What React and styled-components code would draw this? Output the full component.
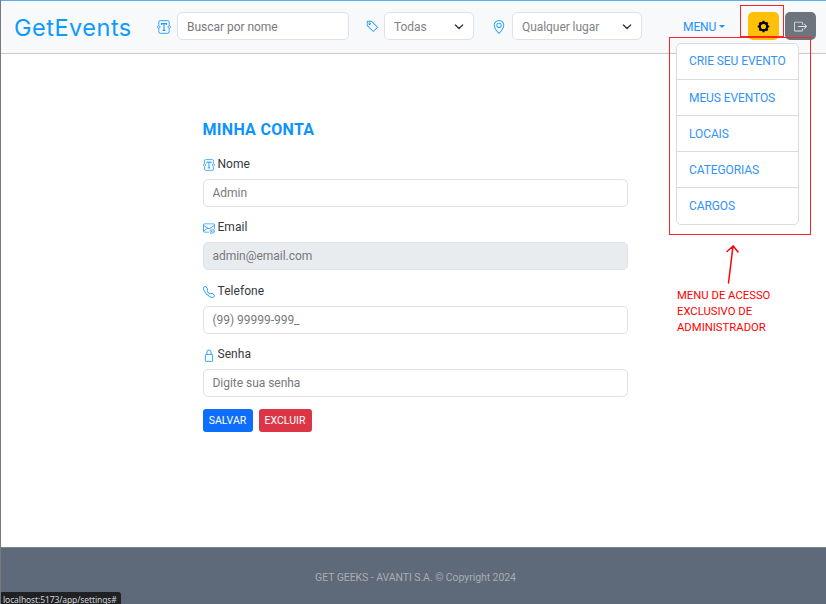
import React from "react";
import styled, { createGlobalStyle } from "styled-components";
import { BsTag, BsGeoAlt, BsEnvelopeAt, BsTelephone, BsBoxArrowRight } from "react-icons/bs";

const Global = createGlobalStyle`
  *, *::before, *::after { box-sizing: border-box; }
  body { margin: 0; background: #fff; overflow: hidden; }
  input, button { font: inherit; }
`;

const Page = styled.div`
  position: relative;
  display: flex;
  flex-direction: column;
  height: 604px;
  border-left: 1px solid #77797b;
  overflow: hidden;
  font: 12px/18px Roboto, sans-serif;
  color: #343a40;
`;

const Header = styled.header`
  display: flex;
  align-items: center;
  height: 54px;
  flex: none;
  padding: 0 10px 2px 12px;
  border-top: 1px solid #5aade8;
  border-bottom: 1px solid #c6c9cc;
  background: #f8f9fa;
`;

const Logo = styled.a`
  width: 144px;
  flex: none;
  padding: 4px 0 0 1px;
  color: #0d99ff;
  font: 400 23.5px/32px Inter, sans-serif;
  letter-spacing: 0.5px;
  white-space: nowrap;
`;

const Filter = styled.div`
  display: flex;
  align-items: center;
  flex: none;
  width: ${(p) => p.$width}px;
  margin-right: ${(p) => p.$gap}px;
`;

const FilterIcon = styled.span`
  display: flex;
  width: ${(p) => p.$width || 18}px;
  padding-top: 1px;
  color: #1e9bfa;
  flex: none;
`;

const Field = styled.input`
  display: block;
  width: 100%;
  min-width: 0;
  height: 28px;
  padding: ${(p) => (p.$inHeader ? "1px 9px 0" : "0 9px")};
  border: 1px solid #dee2e6;
  border-radius: 5px;
  background: ${(p) => (p.disabled ? "#e9ecef" : "#fff")};
  color: #77797c;
  outline: 0;
  opacity: 1;
  letter-spacing: -0.03px;
  &::placeholder { color: #77797c; opacity: 1; }
`;

const Select = styled.button`
  display: flex;
  align-items: center;
  justify-content: space-between;
  flex: 1;
  height: 28px;
  padding: 1px 9px 0;
  border: 1px solid #dee2e6;
  border-radius: 5px;
  background: #fff;
  color: #808386;
  letter-spacing: -0.06px;
`;

const MenuToggle = styled.a`
  display: flex;
  align-items: center;
  gap: 3px;
  width: 65px;
  padding-top: 1px;
  flex: none;
  color: #1e90ff;
  letter-spacing: -0.1px;
  &::after {
    content: "";
    border: 3px solid transparent;
    border-top-color: #1e90ff;
    border-bottom: 0;
  }
`;

const IconButton = styled.button`
  display: flex;
  align-items: center;
  justify-content: center;
  flex: none;
  width: 31px;
  height: 28px;
  margin-right: 6px;
  padding: 1px 0 0;
  border: 0;
  border-radius: 5px;
  background: ${(p) => p.$bg};
  color: ${(p) => p.$color};
`;

const Main = styled.main`
  flex: 1;
  padding: 66px 198px 0 201.5px;
`;

const Title = styled.h1`
  margin: 0 0 14.6px;
  color: #0d93ff;
  font-size: 16px;
  line-height: 20px;
  font-weight: 700;
  letter-spacing: 0.3px;
`;

const Group = styled.div`
  height: 63.5px;
`;

const Label = styled.label`
  display: flex;
  align-items: center;
  gap: 3px;
  height: 18px;
  margin-bottom: 6px;
  letter-spacing: 0.05px;
  svg { color: #1e9bfa; flex: none; position: relative; top: 1px; }
`;

const Actions = styled.div`
  display: flex;
  gap: 6px;
`;

const Action = styled.button`
  height: 23px;
  width: ${(p) => p.$width}px;
  padding: 1px 0 0;
  border: 0;
  border-radius: 3px;
  background: ${(p) => p.$bg};
  color: #fff;
  font-size: 10.5px;
`;

const Footer = styled.footer`
  display: flex;
  align-items: center;
  justify-content: center;
  flex: none;
  height: 57px;
  padding: 3px 0 0 4px;
  border-top: 1px solid #7d8590;
  background: #5e697a;
  color: #a9adb3;
  font-size: 10.5px;
  letter-spacing: -0.07px;
`;

const Dropdown = styled.ul`
  position: absolute;
  top: 43px;
  left: 675px;
  width: 123px;
  margin: 0;
  padding: 0;
  list-style: none;
  border: 1px solid #d9dbde;
  border-radius: 5px;
  background: #fff;
`;

const DropdownItem = styled.li`
  height: 36px;
  padding: 0 0 0 12px;
  line-height: 37px;
  letter-spacing: -0.09px;
  color: #3392f5;
  white-space: nowrap;
  &:first-child { height: 35px; line-height: 35px; }
  &:last-child { height: 37px; }
  & + & { border-top: 1px solid #d9dbde; }
`;

const Highlight = styled.div`
  position: absolute;
  left: ${(p) => p.$x}px;
  top: ${(p) => p.$y}px;
  width: ${(p) => p.$w}px;
  height: ${(p) => p.$h}px;
  border: 1px solid #f22;
`;

const Arrow = styled.svg`
  position: absolute;
  left: 719px;
  top: 240px;
`;

const Note = styled.p`
  position: absolute;
  left: 676px;
  top: 287.5px;
  width: 120px;
  margin: 0;
  color: #f00;
  font-size: 11.3px;
  line-height: 16.2px;
`;

const StatusBar = styled.div`
  position: absolute;
  left: -1px;
  bottom: 0;
  width: 121px;
  height: 12px;
  padding-left: 3px;
  border-top-right-radius: 3px;
  background: #202124;
  color: #d2d3d5;
  font: 8.5px/15px "Noto Sans", sans-serif;
  letter-spacing: -0.1px;
  white-space: nowrap;
`;

const TextIcon = ({ width = 14, height = 14 }) => (
  <svg width={width} height={height} viewBox="0 0 14 14" fill="none" stroke="currentColor" strokeWidth=".9">
    <path d="M1.8 4.8V2.3Q1.8.7 3.2.7h7.6q1.4 0 1.4 1.6v2.5M1.8 9.2v2.5q0 1.6 1.4 1.6h7.6q1.4 0 1.4-1.6V9.2" />
    <path d="m1.7 5.2 1.6 1.8-1.6 1.8L.4 7ZM12.3 5.2 10.7 7l1.6 1.8L13.6 7Z" />
    <path d="M4.5 5V3.6h5V5M7 3.6v6.7M5.6 10.4h2.8" strokeWidth="1.1" />
  </svg>
);

const GearIcon = () => (
  <svg width="13" height="13" viewBox="0 0 14 14" fill="none" stroke="currentColor">
    <circle cx="7" cy="7" r="4" strokeWidth="2.4" />
    <path d="M7 .8v2M7 11.2v2M.8 7h2M11.2 7h2M2.6 2.6 4 4M10 10l1.4 1.4M2.6 11.4 4 10M10 4l1.4-1.4" strokeWidth="2.3" />
  </svg>
);

const LockIcon = () => (
  <svg width="12" height="13" viewBox="0 0 12 13" fill="none" stroke="currentColor" strokeWidth=".9">
    <rect x="2.4" y="5.4" width="7.2" height="7" rx=".6" />
    <path d="M3.9 5.4V3.1a2.1 2.1 0 0 1 4.2 0v2.3" />
  </svg>
);

const Chevron = () => (
  <svg width="10" height="8" viewBox="0 0 10 8" fill="none" stroke="#343a40" strokeWidth="1.4" strokeLinecap="round" strokeLinejoin="round">
    <path d="m1.4 2 3.6 3.6L8.6 2" />
  </svg>
);

const fields = [
  { label: "Nome", icon: <TextIcon width={12} height={12} />, text: "Admin" },
  { label: "Email", icon: <BsEnvelopeAt size={12} />, text: "admin@email.com", disabled: true },
  { label: "Telefone", icon: <BsTelephone size={12} />, text: "(99) 99999-999_" },
  { label: "Senha", icon: <LockIcon />, text: "Digite sua senha" },
];

const links = ["CRIE SEU EVENTO", "MEUS EVENTOS", "LOCAIS", "CATEGORIAS", "CARGOS"];

export default function App() {
  return (
    <>
      <Global />
      <Page>
        <Header>
          <Logo>GetEvents</Logo>
          <Filter $width={192} $gap={17}>
            <FilterIcon $width={20}><TextIcon width={14} height={14} /></FilterIcon>
            <Field placeholder="Buscar por nome" $inHeader />
          </Filter>
          <Filter $width={108} $gap={18}>
            <FilterIcon $width={18}><BsTag size={13} /></FilterIcon>
            <Select>Todas<Chevron /></Select>
          </Filter>
          <Filter $width={150} $gap={41}>
            <FilterIcon $width={20}><BsGeoAlt size={14} /></FilterIcon>
            <Select>Qualquer lugar<Chevron /></Select>
          </Filter>
          <MenuToggle>MENU</MenuToggle>
          <IconButton $bg="#ffc107" $color="#000"><GearIcon /></IconButton>
          <IconButton $bg="#6c757d" $color="#e3e5e7"><BsBoxArrowRight size={13} /></IconButton>
        </Header>
        <Main>
          <Title>MINHA CONTA</Title>
          {fields.map((f) => (
            <Group key={f.label}>
              <Label>{f.icon}{f.label}</Label>
              <Field placeholder={f.text} disabled={f.disabled} />
            </Group>
          ))}
          <Actions>
            <Action $bg="#0d6efd" $width={50}>SALVAR</Action>
            <Action $bg="#dc3545" $width={53}>EXCLUIR</Action>
          </Actions>
        </Main>
        <Footer>GET GEEKS - AVANTI S.A. © Copyright 2024</Footer>
        <Dropdown>
          {links.map((l) => <DropdownItem key={l}>{l}</DropdownItem>)}
        </Dropdown>
        <Highlight $x={739} $y={5} $w={44} $h={32} />
        <Highlight $x={668} $y={37} $w={142} $h={198} />
        <Arrow width="20" height="46" fill="none" stroke="#f00" strokeWidth="1.5" strokeLinecap="round">
          <path d="M8.5 43 13 6M7 11.5 13.3 6l4.7 6" />
        </Arrow>
        <Note>MENU DE ACESSO EXCLUSIVO DE ADMINISTRADOR</Note>
        <StatusBar>localhost:5173/app/settings#</StatusBar>
      </Page>
    </>
  );
}
